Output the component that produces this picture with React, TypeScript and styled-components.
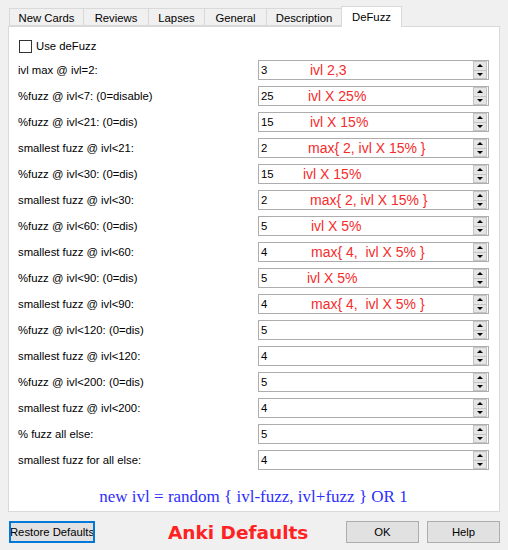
import React from "react";
import styled, { createGlobalStyle } from "styled-components";

const Global = createGlobalStyle`
  html, body { margin: 0; padding: 0; background: #f0f0f0; }
  body { font-family: "Liberation Sans", Arial, sans-serif; font-size: 11.3px; color: #000; }
`;

const Window = styled.div`
  width: 508px;
  height: 550px;
  box-sizing: border-box;
  padding: 6px 8px 0 8px;
  display: flex;
  flex-direction: column;
`;

const TabBar = styled.div`
  display: flex;
  align-items: flex-end;
  height: 20px;
  padding-left: 1px;
  position: relative;
  z-index: 1;
`;

const Tab = styled.div<{ $w: number; $active?: boolean }>`
  width: ${(p) => p.$w}px;
  height: ${(p) => (p.$active ? 21 : 18)}px;
  margin-bottom: ${(p) => (p.$active ? -1 : 0)}px;
  box-sizing: border-box;
  border: 1px solid #d9d9d9;
  border-bottom: ${(p) => (p.$active ? "none" : "1px solid #d9d9d9")};
  margin-left: -1px;
  background: ${(p) => (p.$active ? "#ffffff" : "#f0f0f0")};
  display: flex;
  align-items: center;
  justify-content: center;
  padding-top: ${(p) => (p.$active ? 0 : 1)}px;
  white-space: nowrap;
  &:first-child { margin-left: 0; }
`;

const Panel = styled.div`
  height: 486px;
  box-sizing: border-box;
  background: #ffffff;
  border: 1px solid #d9d9d9;
  padding: 9px 10px 0 9px;
  display: flex;
  flex-direction: column;
`;

const CheckRow = styled.label`
  display: flex;
  align-items: center;
  height: 20px;
  margin-bottom: 1px;
  padding-left: 1px;
  gap: 4px;
`;

const CheckBox = styled.span`
  width: 13px;
  height: 13px;
  box-sizing: border-box;
  border: 1px solid #333;
  background: #fff;
`;

const Rows = styled.div`
  display: grid;
  grid-template-columns: 240px 231px;
  grid-auto-rows: 26px;
  align-items: center;
`;

const Label = styled.div`
  white-space: pre;
`;

const SpinBox = styled.div`
  position: relative;
  height: 20px;
  box-sizing: border-box;
  border: 1px solid #adadad;
  background: #fff;
  display: flex;
  align-items: center;
  padding-left: 2px;
`;

const Value = styled.span`
  flex: 1;
`;

const Arrows = styled.div`
  display: flex;
  flex-direction: column;
  width: 14px;
  height: 18px;
  margin-right: 1px;
`;

const ArrowBtn = styled.div<{ $down?: boolean }>`
  flex: 1;
  box-sizing: border-box;
  background: #e5e5e5;
  border: 1px solid #c4c4c4;
  border-top: ${(p) => (p.$down ? "none" : "1px solid #c4c4c4")};
  display: flex;
  align-items: center;
  justify-content: center;
  &::after {
    content: "";
    width: 0;
    height: 0;
    border-left: 3px solid transparent;
    border-right: 3px solid transparent;
    ${(p) => (p.$down ? "border-top: 3px solid #000;" : "border-bottom: 3px solid #000;")}
  }
`;

const Note = styled.span<{ $x: number }>`
  position: absolute;
  left: ${(p) => p.$x}px;
  top: 1px;
  font-family: "Liberation Sans", Arial, sans-serif;
  font-size: 14px;
  color: #f42c2c;
  white-space: pre;
  pointer-events: none;
`;

const Formula = styled.div`
  margin-top: 12px;
  line-height: 24px;
  text-align: center;
  font-family: "Liberation Serif", "Times New Roman", serif;
  font-size: 17px;
  color: #2d2dff;
`;

const Footer = styled.div`
  display: flex;
  align-items: center;
  height: 22px;
  margin-top: 9px;
  padding-left: 1px;
`;

const Button = styled.div<{ $w: number; $focus?: boolean }>`
  width: ${(p) => p.$w}px;
  height: 22px;
  box-sizing: border-box;
  background: #e1e1e1;
  border: ${(p) => (p.$focus ? "2px solid #0078d7" : "1px solid #adadad")};
  display: flex;
  align-items: center;
  justify-content: center;
  white-space: nowrap;
  overflow: hidden;
`;

const AnkiDefaults = styled.span`
  margin-left: 73px;
  font-family: "Comic Sans MS", "DejaVu Sans", sans-serif;
  font-weight: bold;
  font-size: 18.5px;
  color: #ff2222;
`;

const Spacer = styled.div`
  flex: 1;
`;

const ButtonGroup = styled.div`
  display: flex;
  gap: 8px;
`;

const tabs = [
  { name: "New Cards", w: 75 },
  { name: "Reviews", w: 66 },
  { name: "Lapses", w: 57 },
  { name: "General", w: 63 },
  { name: "Description", w: 76 },
  { name: "DeFuzz", w: 61, active: true },
];

type Row = { label: string; value: string; note?: string; x?: number };

const rows: Row[] = [
  { label: "ivl max @ ivl=2:", value: "3", note: "ivl 2,3", x: 51 },
  { label: "%fuzz @ ivl<7: (0=disable)", value: "25", note: "ivl X 25%", x: 49 },
  { label: "%fuzz @ ivl<21: (0=dis)", value: "15", note: "ivl X 15%", x: 51 },
  { label: "smallest fuzz @ ivl<21:", value: "2", note: "max{ 2, ivl X 15% }", x: 49 },
  { label: "%fuzz @ ivl<30: (0=dis)", value: "15", note: "ivl X 15%", x: 44 },
  { label: "smallest fuzz @ ivl<30:", value: "2", note: "max{ 2, ivl X 15% }", x: 51 },
  { label: "%fuzz @ ivl<60: (0=dis)", value: "5", note: "ivl X 5%", x: 52 },
  { label: "smallest fuzz @ ivl<60:", value: "4", note: "max{ 4,  ivl X 5% }", x: 52 },
  { label: "%fuzz @ ivl<90: (0=dis)", value: "5", note: "ivl X 5%", x: 48 },
  { label: "smallest fuzz @ ivl<90:", value: "4", note: "max{ 4,  ivl X 5% }", x: 52 },
  { label: "%fuzz @ ivl<120: (0=dis)", value: "5" },
  { label: "smallest fuzz @ ivl<120:", value: "4" },
  { label: "%fuzz @ ivl<200: (0=dis)", value: "5" },
  { label: "smallest fuzz @ ivl<200:", value: "4" },
  { label: "% fuzz all else:", value: "5" },
  { label: "smallest fuzz for all else:", value: "4" },
];

export default function App() {
  return (
    <Window>
      <Global />
      <TabBar>
        {tabs.map((t) => (
          <Tab key={t.name} $w={t.w} $active={t.active}>
            {t.name}
          </Tab>
        ))}
      </TabBar>
      <Panel>
        <CheckRow>
          <CheckBox />
          Use deFuzz
        </CheckRow>
        <Rows>
          {rows.map((r) => (
            <React.Fragment key={r.label}>
              <Label>{r.label}</Label>
              <SpinBox>
                <Value>{r.value}</Value>
                {r.note && <Note $x={r.x ?? 50}>{r.note}</Note>}
                <Arrows>
                  <ArrowBtn />
                  <ArrowBtn $down />
                </Arrows>
              </SpinBox>
            </React.Fragment>
          ))}
        </Rows>
        <Formula>new ivl = random {"{"} ivl-fuzz, ivl+fuzz {"}"} OR 1</Formula>
      </Panel>
      <Footer>
        <Button $w={86} $focus>
          Restore Defaults
        </Button>
        <AnkiDefaults>Anki Defaults</AnkiDefaults>
        <Spacer />
        <ButtonGroup>
          <Button $w={73}>OK</Button>
          <Button $w={73}>Help</Button>
        </ButtonGroup>
      </Footer>
    </Window>
  );
}
